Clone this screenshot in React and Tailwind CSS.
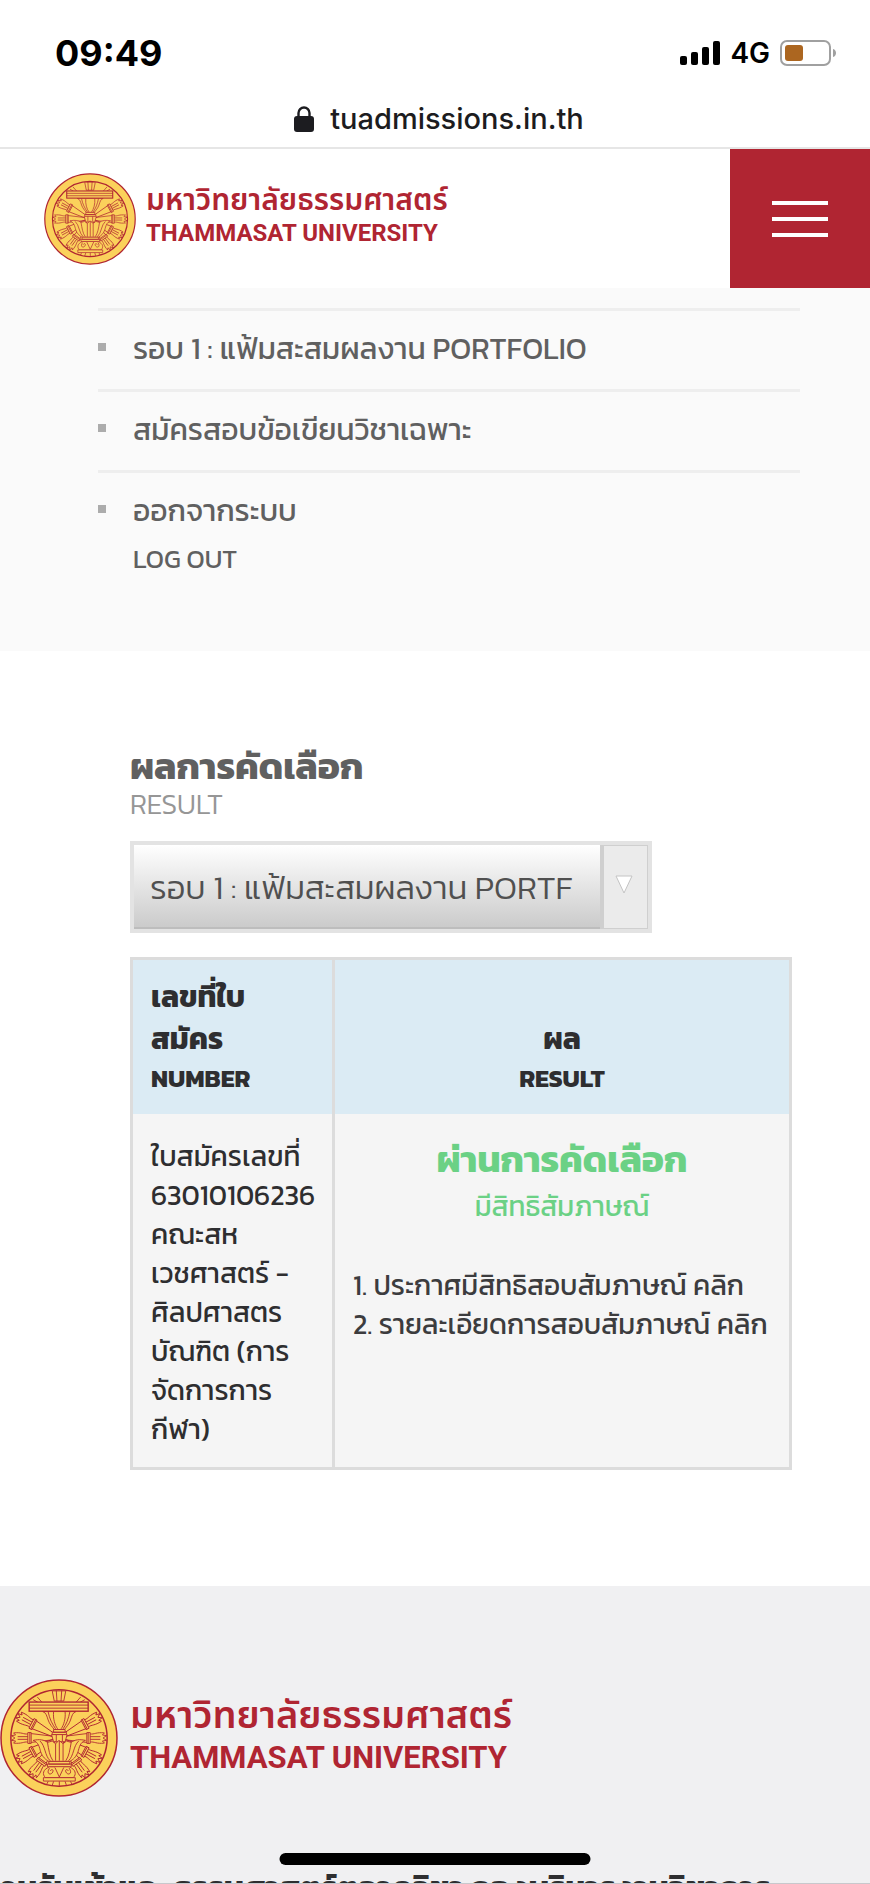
const SPOKE_ANGLES = [0, 28, -28, 152, 180, -152, -54, -126];

function Spoke({ angle }) {
  return (
    <g transform={`rotate(${angle} 180 197)`}>
      <path d="M172 193 L98 184 M172 201 L98 210" />
      <path d="M98 181 h-10 v32 h10 z M94 181 V213" />
      <path d="M88 185 C76 187 70 179 46 182 L52 188 L40 190 L50 197 L40 204 L52 206 L46 212 C70 215 76 207 88 209" />
      <path d="M88 193 H58 M88 201 H58" />
    </g>
  );
}

function Seal({ className }) {
  return (
    <svg viewBox="6 23 348 348" className={className} fill="none" stroke="#b02532" strokeWidth="2.6" role="img" aria-label="Thammasat University seal">
      <circle cx="180" cy="197" r="171" fill="#fbd15b" strokeWidth="4.5" />
      <circle cx="180" cy="197" r="142" strokeWidth="4.5" />
      {SPOKE_ANGLES.map((a) => (
        <Spoke key={a} angle={a} />
      ))}
      <g fill="#fbd15b">
        <path d="M160 58 L166 88 H194 L200 58 Z" />
        <path d="M172 57 L174 88 M188 57 L186 88 M116 76 L130 92 M104 84 L118 92 M244 76 L230 92 M256 84 L242 92" />
        <path d="M132 119 C142 122 144 132 148 144 C152 156 160 164 166 172 H196 C202 164 210 156 214 144 C218 132 220 122 230 119 Z" />
        <path d="M148 120 C152 140 160 156 170 170 M212 120 C208 140 202 156 192 170 M164 120 C162 140 168 160 176 170 M198 120 C200 140 194 160 186 170" />
        <rect x="92" y="91" width="174" height="27" strokeWidth="4" />
        <path d="M92 100 H266 M92 109 H266" />
        <path d="M164 172 H198 V180 H164 Z M160 180 H202 V187 H160 Z" />
        <path d="M158 187 H204 L198 208 H164 Z M172 188 V206 M190 188 V206" />
        <path d="M104 204 C122 200 136 202 146 210 L160 206 L170 214 L180 204 L192 214 L202 206 L216 210 C226 202 240 200 258 204 C242 210 240 224 236 238 C230 254 222 260 212 266 H150 C140 260 132 254 126 238 C122 224 120 210 104 204 Z" />
        <path d="M124 206 C140 220 138 250 154 264 M238 206 C222 220 224 250 208 264 M146 210 C150 232 152 250 162 264 M216 210 C212 232 210 250 200 264 M170 214 V264 M181 206 V264 M192 214 V264" />
        <path d="M150 266 H212 V274 H150 Z M146 274 H216 V282 H146 Z" />
        <path d="M152 282 C132 290 130 304 140 314 H222 C232 304 230 290 210 282 Z" />
        <path d="M152 286 C142 300 152 308 160 300 C166 292 160 286 154 294 M210 286 C220 300 210 308 202 300 C196 292 202 286 208 294 M168 284 L181 312 L194 284" />
        <path d="M134 314 H228 V324 H134 Z" />
        <path d="M148 325 L144 333 M164 325 L160 337 M181 325 V338 M198 325 L202 337 M214 325 L218 333" />
      </g>
    </svg>
  );
}

function StatusBar() {
  return (
    <div className="flex h-[90px] shrink-0 items-center justify-between pt-4 pr-8 pl-[55px] text-black">
      <span className="font-[Inter,sans-serif] text-[36px] leading-none font-bold">09:49</span>
      <div className="flex items-center gap-2.5">
        <svg className="h-6 w-10" viewBox="0 0 40 24" aria-hidden="true">
          <rect x="0" y="15" width="7" height="9" rx="2" />
          <rect x="11" y="11" width="7" height="13" rx="2" />
          <rect x="22" y="6" width="7" height="18" rx="2" />
          <rect x="33" y="0" width="7" height="24" rx="2" />
        </svg>
        <span className="font-[Inter,sans-serif] text-[28px] leading-none font-semibold">4G</span>
        <svg className="h-7 w-[58px]" viewBox="0 0 58 28" aria-hidden="true">
          <rect x="1" y="2" width="49" height="24" rx="6" fill="none" stroke="#a0a0a0" strokeWidth="2" />
          <rect x="5" y="6" width="18" height="16" rx="3" fill="#ac6620" />
          <path d="M53 10 C57 11 57 17 53 18 Z" fill="#a0a0a0" />
        </svg>
      </div>
    </div>
  );
}

function NavItem({ children, sub }) {
  return (
    <li className="flex h-[81px] border-t-[3px] border-[#eeeeee] pt-[18px]">
      <span className="mt-3.5 mr-[27px] size-2 shrink-0 bg-[#acacac]" />
      <a href="#" className="text-[30px] leading-10 text-[#606060]">
        {children}
        {sub && <span className="block pt-2 text-[26px] leading-10">{sub}</span>}
      </a>
    </li>
  );
}

export default function App() {
  return (
    <div className="relative flex h-screen flex-col overflow-hidden border-b border-[#c8c8cc] bg-white font-[Kanit,'Noto_Sans_Thai','Noto_Sans',sans-serif] font-light text-[#2e2e30]">
      <StatusBar />
      <div className="flex h-[59px] shrink-0 items-center justify-center gap-4 border-b-2 border-[#e6e6e6] pl-2 font-[Inter,sans-serif] text-[29px] leading-none font-medium text-[#1c1c20]">
        <svg className="h-[26px] w-5" viewBox="0 0 20 26" aria-hidden="true">
          <rect x="0" y="10" width="20" height="16" rx="3" fill="#1c1c20" />
          <path d="M4.500 12 V7 a5.500 5.500 0 0 1 11 0 V12" fill="none" stroke="#1c1c20" strokeWidth="2.400" />
        </svg>
        <span>tuadmissions.in.th</span>
      </div>

      <header className="flex h-[139px] shrink-0 items-center justify-between bg-white pl-11">
        <a href="#" className="flex items-center gap-2.5 text-[#b02532]">
          <Seal className="size-[92px]" />
          <span className="flex flex-col pb-2">
            <span className="font-['Noto_Sans_Thai',sans-serif] text-[30px] leading-9 font-semibold">มหาวิทยาลัยธรรมศาสตร์</span>
            <span className="font-[Roboto,sans-serif] text-[24px] leading-7 font-bold">THAMMASAT UNIVERSITY</span>
          </span>
        </a>
        <button type="button" aria-label="Menu" className="flex h-full w-[140px] flex-col items-center justify-center gap-3 bg-[#b02532]">
          <span className="h-1 w-14 bg-white" />
          <span className="h-1 w-14 bg-white" />
          <span className="h-1 w-14 bg-white" />
        </button>
      </header>

      <nav className="h-[363px] shrink-0 bg-[#fafafa] pt-5 pr-[70px] pl-[98px] font-normal">
        <ul>
          <NavItem>รอบ 1 : แฟ้มสะสมผลงาน PORTFOLIO</NavItem>
          <NavItem>สมัครสอบข้อเขียนวิชาเฉพาะ</NavItem>
          <NavItem sub="LOG OUT">ออกจากระบบ</NavItem>
        </ul>
      </nav>

      <main className="h-[935px] shrink-0 pt-[93px] pr-[78px] pl-[130px]">
        <h1 className="text-[37px] leading-[44px] font-bold text-[#606060]">ผลการคัดเลือก</h1>
        <p className="text-[28px] leading-8 text-[#969696]">RESULT</p>

        <div className="mt-[21px] flex w-[522px] border-4 border-[#e3e3e3]">
          <label className="sr-only" htmlFor="round">รอบ</label>
          <select id="round" className="h-[84px] min-w-0 flex-1 appearance-none border-b-2 border-[#bdbdbd] bg-linear-to-b from-white to-[#cbcbcb] pt-1 pl-4 text-[33px] text-[#505050]">
            <option>รอบ 1 : แฟ้มสะสมผลงาน PORTF</option>
          </select>
          <span className="flex w-[48px] items-center justify-center border border-l-4 border-[#cfcfcf] bg-[#ebebeb] pr-1 pb-1">
            <svg className="size-5" viewBox="0 0 20 20" aria-hidden="true">
              <path d="M2 1 H18 L10 18 Z" fill="#fff" stroke="#c4c4c4" strokeWidth="1" />
            </svg>
          </span>
        </div>

        <table className="mt-6 w-full border-collapse border-[3px] border-[#dcdcdc]">
          <thead>
            <tr className="h-[155px] bg-[#dbebf4] text-[30px] leading-[42px]">
              <th className="w-[202px] border-r-[3px] border-[#dcdcdc] px-[18px] pb-[18px] text-left align-bottom font-bold">
                เลขที่ใบ<br />สมัคร<span className="block text-[25px] leading-9">NUMBER</span>
              </th>
              <th className="px-[18px] pb-[18px] align-bottom font-bold">
                ผล<span className="block text-[25px] leading-9">RESULT</span>
              </th>
            </tr>
          </thead>
          <tbody>
            <tr className="h-[355px] bg-[#f5f5f5] align-top text-[28px] font-normal">
              <td className="border-r-[3px] border-[#dcdcdc] pt-[23px] pl-[18px] leading-[39px] whitespace-nowrap">
                ใบสมัครเลขที่<br />63010106236<br />คณะสห<br />เวชศาสตร์ -<br />ศิลปศาสตร<br />บัณฑิต (การ<br />จัดการการ<br />กีฬา)
              </td>
              <td className="px-[18px] pt-5">
                <div className="text-center text-[#6bd185]">
                  <h2 className="text-[37px] leading-[50px] font-bold">ผ่านการคัดเลือก</h2>
                  <p className="leading-[44px]">มีสิทธิสัมภาษณ์</p>
                </div>
                <ol className="pt-[38px] leading-[39px] whitespace-nowrap text-[#3c3c3e]">
                  <li>1. <a href="#">ประกาศมีสิทธิสอบสัมภาษณ์ คลิก</a></li>
                  <li>2. <a href="#">รายละเอียดการสอบสัมภาษณ์ คลิก</a></li>
                </ol>
              </td>
            </tr>
          </tbody>
        </table>
      </main>

      <footer className="h-[420px] shrink-0 bg-[#f0f0f2] pt-[93px]">
        <a href="#" className="flex items-center gap-3 text-[#b02532]">
          <Seal className="size-[118px]" />
          <span className="flex flex-col pb-1.5">
            <span className="font-['Noto_Sans_Thai',sans-serif] text-[38px] leading-[46px] font-semibold">มหาวิทยาลัยธรรมศาสตร์</span>
            <span className="font-[Roboto,sans-serif] text-[31px] leading-9 font-bold">THAMMASAT UNIVERSITY</span>
          </span>
        </a>
        <p className="mt-[66px] -ml-4 text-[32px] leading-[50px] font-bold whitespace-nowrap">งานรับเข้าและ ธรรมศาสตร์ตลาดวิชา กองบริหารงานวิชาการ</p>
      </footer>

      <div className="absolute bottom-[18px] left-1/2 h-3 w-[311px] -translate-x-1/2 rounded-full bg-black" />
    </div>
  );
}
